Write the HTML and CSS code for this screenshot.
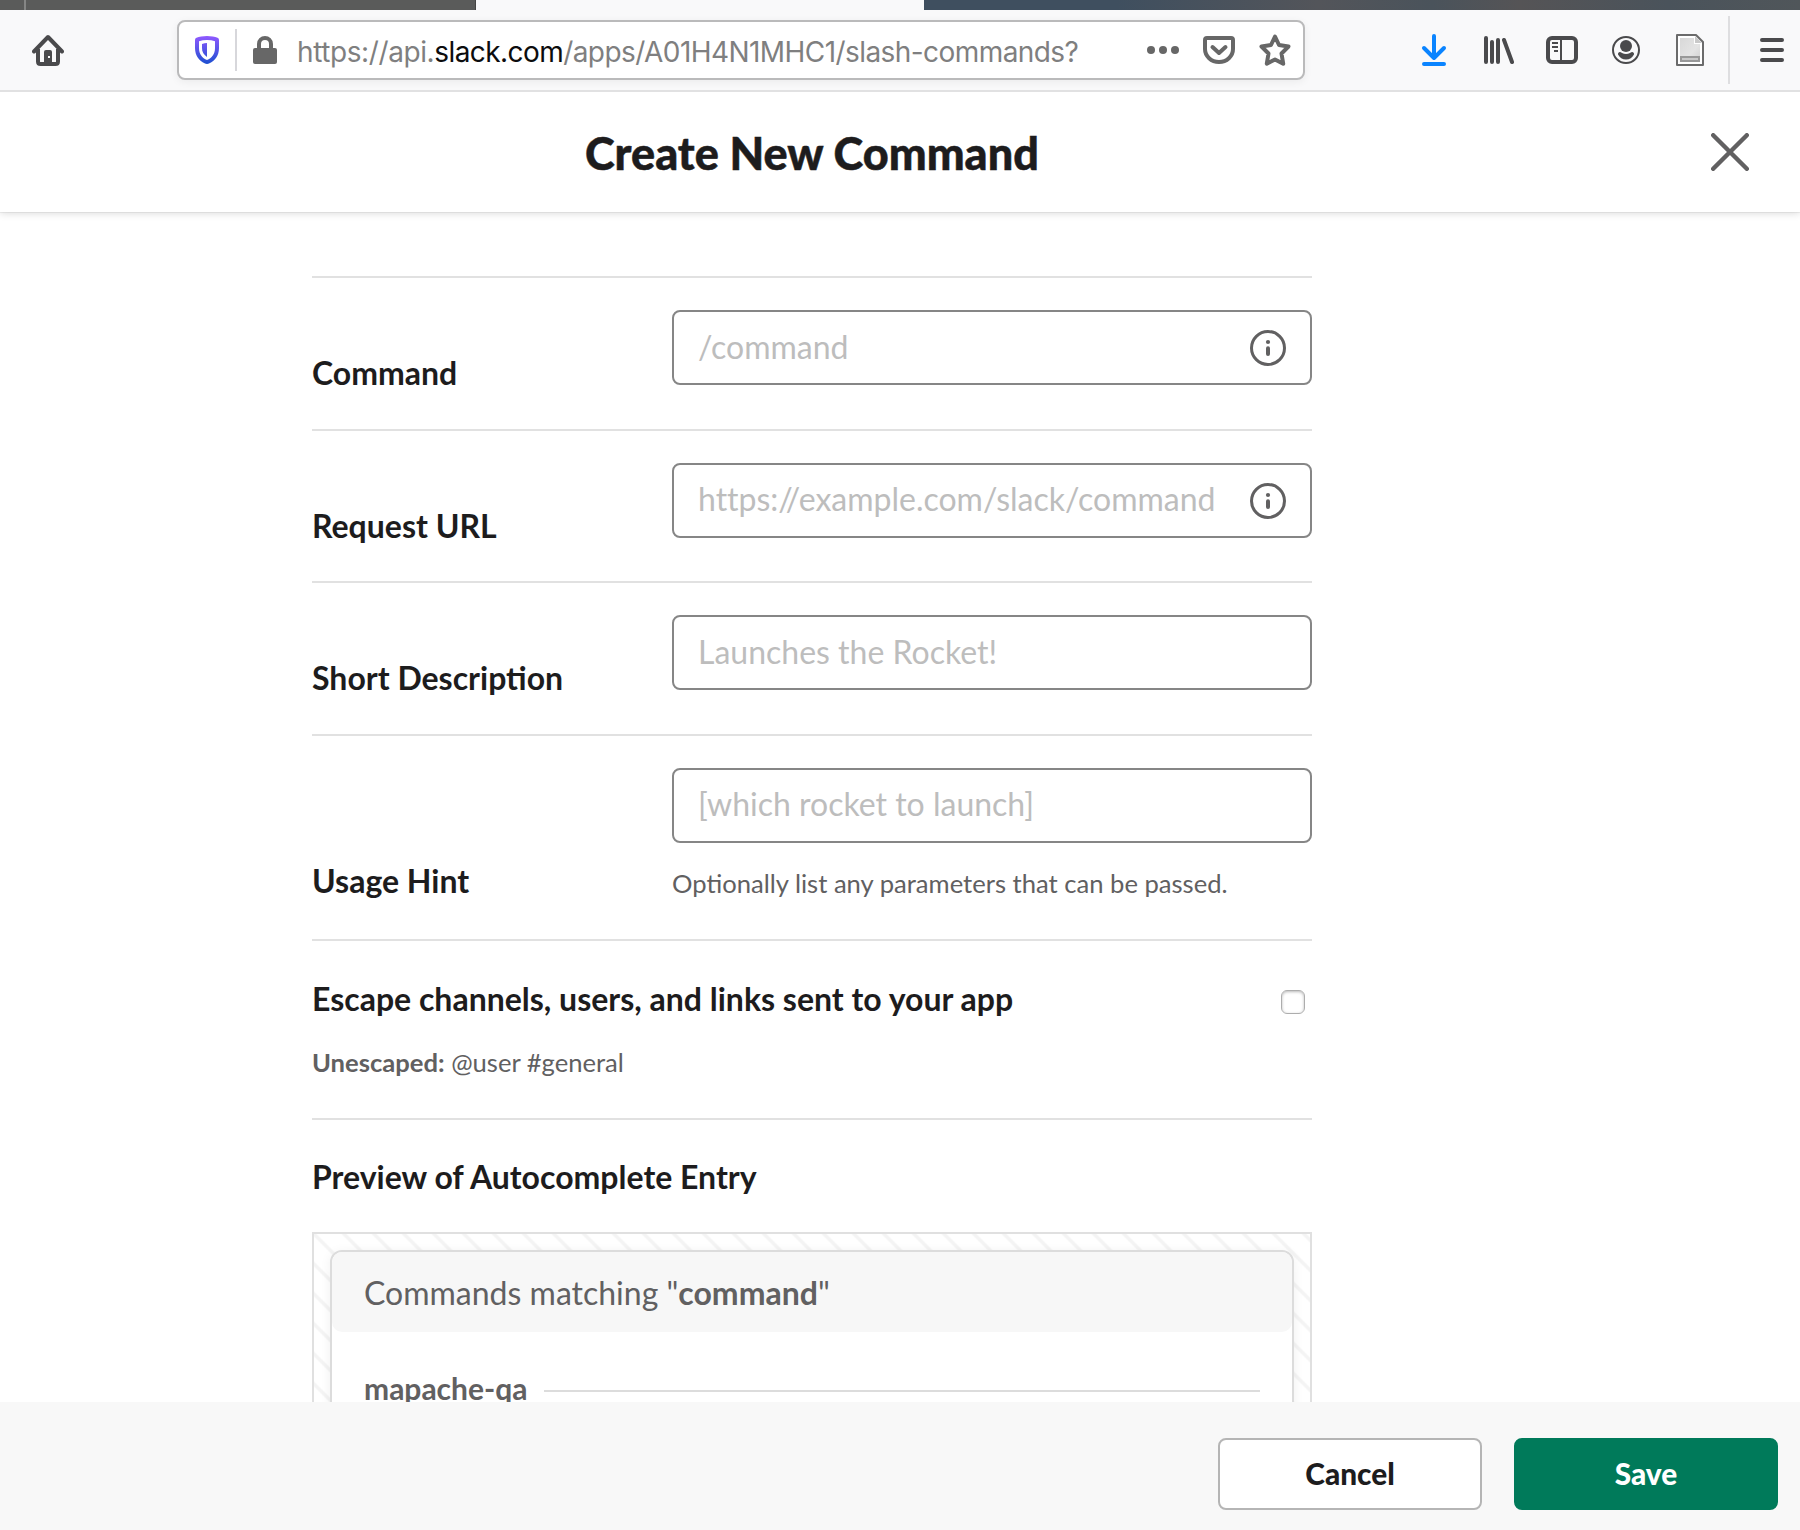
FILE: index.html
```html
<!DOCTYPE html>
<html lang="en">
<head>
<meta charset="utf-8">
<title>Create New Command</title>
<link rel="stylesheet" href="styles.css">
</head>
<body>
<div class="window">
  <div class="tabs"><span class="tab-edge"></span><span class="tab-left"></span><span class="tab-active"></span><span class="tab-right"></span></div>
  <nav class="toolbar">
    <svg class="icon home" viewBox="0 0 32 32"><path d="M2 17.500 16 3 30 17.500" fill="none" stroke="#4a4a4c" stroke-width="4" stroke-linecap="round" stroke-linejoin="round"/><path d="M6 15v12.500q0 2.500 2.500 2.500h15q2.500 0 2.500-2.500V15" fill="none" stroke="#4a4a4c" stroke-width="4"/><path d="M12 28V18q0-2 2-2h4q2 0 2 2v10z" fill="#4a4a4c"/><rect x="16" y="22" width="2" height="2" fill="#f9f9fa"/></svg>
    <div class="urlbar">
      <svg class="shield" viewBox="0 0 24 28"><defs><linearGradient id="g" gradientUnits="userSpaceOnUse" x1="0" y1="0" x2="0" y2="28"><stop offset="0" stop-color="#9059ff"/><stop offset="1" stop-color="#1c4fd0"/></linearGradient></defs><path fill="url(#g)" fill-rule="evenodd" d="M12 0c4 0 8 .8 10.500 1.700Q24 2.300 24 4v8c0 8-4.500 13-9.500 15.300q-2.500 1.200-5 0C4.500 25 0 20 0 12V4Q0 2.300 1.500 1.700C4 .8 8 0 12 0zM12 4Q7.500 4 4 5.200V12c0 6 3.200 10 8 12 4.800-2 8-6 8-12V5.200Q16.500 4 12 4z"/><path fill="url(#g)" d="M12 7v14C8.500 18.500 7 16 7 12V8q2.500-.8 5-1z"/></svg>
      <span class="url-rule"></span>
      <svg class="lock" viewBox="0 0 24 28"><path d="M6 13V8a6 6 0 0 1 12 0v5" fill="none" stroke="#676767" stroke-width="4"/><rect y="12" width="24" height="16" rx="2" fill="#676767"/></svg>
      <span class="url"><span class="scheme">https://api.</span><b>slack.com</b>/apps/A01H4N1MHC1/slash-commands?</span>
      <svg class="icon" viewBox="0 0 32 32" fill="#676767"><circle cx="4" cy="16" r="4"/><circle cx="16" cy="16" r="4"/><circle cx="28" cy="16" r="4"/></svg>
      <svg class="icon" viewBox="0 0 32 32" fill="none" stroke="#676767" stroke-width="4"><path d="M4 4h24q2 0 2 2v9a14 13 0 0 1-28 0V6q0-2 2-2z"/><path d="m9.500 13 6.500 6 6.500-6" stroke-linecap="round" stroke-linejoin="round"/></svg>
      <svg class="icon" viewBox="0 0 32 32"><path d="m16 2.500 4 8.500 9.500 1.500-7 7 1.700 10.200-8.200-4.200-8.200 4.200 1.700-10.200-7-7L12 11z" fill="none" stroke="#676767" stroke-width="4" stroke-linejoin="round"/></svg>
    </div>
    <div class="actions">
      <svg class="icon" viewBox="0 0 32 32" fill="none" stroke="#0a84ff" stroke-width="4" stroke-linecap="round" stroke-linejoin="round"><path d="M16 2v22M6 14l10 10 10-10M6 30h20"/></svg>
      <svg class="icon" viewBox="0 0 32 32" fill="none" stroke="#4a4a4c" stroke-width="4" stroke-linecap="round"><path d="M4 4v24M10 8v20M16 6v22M22 6l8 22"/></svg>
      <svg class="icon" viewBox="0 0 32 32" fill="none" stroke="#4a4a4c"><rect x="2" y="4" width="28" height="24" rx="4" stroke-width="4"/><path d="M15 4v24M6 9h6M6 13h6M8 17h4" stroke-width="2"/></svg>
      <svg class="icon" viewBox="0 0 32 32"><circle cx="16" cy="16" r="13" fill="none" stroke="#4a4a4c" stroke-width="2"/><circle cx="16" cy="12" r="6" fill="#4a4a4c"/><path d="M9.500 18q-2 .5-1.500 2.500c1.500 3 4.500 5 8 5s6.500-2 8-5q.5-2-1.500-2.500-1.500 0-2.500 1-4 2-8 0-1-1-2.500-1z" fill="#4a4a4c"/></svg>
      <svg class="icon" viewBox="0 0 32 32"><defs><linearGradient id="d" x1="0" y1="0" x2="1" y2="1"><stop offset="0" stop-color="#d8d8d8"/><stop offset=".6" stop-color="#e4e4e4"/><stop offset="1" stop-color="#d0d0d0"/></linearGradient></defs><path d="M3 1h19l7 7v23H3z" fill="#fff" stroke="#6b6b6b" stroke-width="2" stroke-linejoin="round"/><path d="M6 4h14v6h6v18H6z" fill="url(#d)"/><path d="M21 2v7h7z" fill="#c9c9c9"/><rect x="7" y="23" width="18" height="4" fill="#c8c8c8" stroke="#989898" stroke-width="2"/></svg>
      <span class="bar-rule"></span>
      <svg class="icon" viewBox="0 0 32 32" stroke="#4a4a4c" stroke-width="4" stroke-linecap="round"><path d="M6 6h20M6 16h20M6 26h20"/></svg>
    </div>
  </nav>
  <header class="header">
    <h1 class="title">Create New Command</h1>
    <svg class="close" viewBox="0 0 38 38"><path d="m2.200 2.200 33.600 33.600M35.800 2.200 2.200 35.800" stroke="#616061" stroke-width="4.400" stroke-linecap="round"/></svg>
  </header>
  <main class="content">
    <section class="row">
      <label class="label">Command</label>
      <div class="input"><span>/command</span><svg class="info" viewBox="0 0 36 36"><circle cx="18" cy="18" r="16.500" fill="none" stroke="#616061" stroke-width="3"/><circle cx="18" cy="12" r="2.100" fill="#616061"/><path d="M18 18.300v5.700" stroke="#616061" stroke-width="4" stroke-linecap="round"/></svg></div>
    </section>
    <section class="row">
      <label class="label">Request URL</label>
      <div class="input"><span class="no-liga">https://example.com/slack/command</span><svg class="info" viewBox="0 0 36 36"><circle cx="18" cy="18" r="16.500" fill="none" stroke="#616061" stroke-width="3"/><circle cx="18" cy="12" r="2.100" fill="#616061"/><path d="M18 18.300v5.700" stroke="#616061" stroke-width="4" stroke-linecap="round"/></svg></div>
    </section>
    <section class="row">
      <label class="label">Short Description</label>
      <div class="input"><span>Launches the Rocket!</span></div>
    </section>
    <section class="row usage">
      <label class="label">Usage Hint</label>
      <div class="field"><div class="input"><span>[which rocket to launch]</span></div><p class="hint">Optionally list any parameters that can be passed.</p></div>
    </section>
    <section class="escape">
      <div class="escape-head"><span class="heading">Escape channels, users, and links sent to your app</span><span class="checkbox"></span></div>
      <p class="unescaped"><b>Unescaped:</b> @user #general</p>
    </section>
    <section class="preview">
      <h2 class="heading">Preview of Autocomplete Entry</h2>
      <div class="stripes">
        <div class="card">
          <div class="card-head"><span>Commands matching "<b>command</b>"</span></div>
          <div class="group"><b>mapache-qa</b><span class="group-rule"></span></div>
        </div>
      </div>
    </section>
  </main>
  <footer class="footer">
    <button class="btn cancel">Cancel</button>
    <button class="btn save">Save</button>
  </footer>
</div>
</body>
</html>
```
FILE: styles.css
```css
* { box-sizing: border-box; }
body { margin: 0; background: #fff; font-family: Lato, sans-serif; color: #1d1c1d; }
h1, h2, p { margin: 0; }
svg { display: block; flex: none; }
.window { width: 1800px; height: 1530px; display: flex; flex-direction: column; overflow: hidden; }

.tabs { height: 10px; flex: none; display: flex; background: #f9f9fa; }
.tab-edge { width: 26px; background: #5a5b5a; border-right: 2px solid #858685; }
.tab-left { width: 450px; background: #5a5b5a; border-right: 1px solid #444; }
.tab-active { width: 448px; }
.tab-right { flex: 1; background: linear-gradient(90deg, #3f4f5f 0, #3f4f5f 22%, #53555a 45%, #4a535b 58%, #555456 68%, #4a535b 85%, #50565a 100%); }

.toolbar { height: 82px; flex: none; display: flex; align-items: center; padding: 0 12px 0 32px; background: #f9f9fa; border-bottom: 2px solid #e1e1e2; }
.icon { width: 32px; height: 32px; }
.urlbar { width: 1128px; height: 60px; margin-left: 113px; padding: 0 12px 0 16px; display: flex; align-items: center; background: #fff; border: 2px solid #bababb; border-radius: 8px; box-shadow: 0 2px 8px rgba(0,0,0,.06); }
.shield { width: 24px; height: 28px; }
.url-rule { width: 2px; height: 42px; margin: 0 16px; background: #d7d7db; }
.lock { width: 24px; height: 28px; }
.url { width: 829px; flex: none; margin: 0 21px 0 20px; padding-top: 3px; font: 28px/40px Inter, sans-serif; letter-spacing: -.57px; color: #7f7f80; white-space: nowrap; }
.scheme { letter-spacing: -.4px; }
.url b { font-weight: 400; color: #0c0c0d; }
.urlbar .icon + .icon { margin-left: 24px; }
.actions { display: flex; align-items: center; gap: 32px; margin-left: 113px; }
.bar-rule { width: 2px; height: 68px; margin: 0 -6px 0 -10px; background: #dedee0; }

.header { height: 120px; flex: none; display: flex; align-items: center; justify-content: space-between; padding: 0 51px 0 585px; background: #fff; box-shadow: 0 1px 0 rgba(0,0,0,.05), 0 1px 8px rgba(0,0,0,.16); clip-path: inset(0 0 -20px 0); z-index: 1; }
.title { font-size: 45px; line-height: 56px; font-weight: 900; white-space: nowrap; padding-top: 1px; -webkit-text-stroke: .5px #1d1c1d; }
.close { width: 38px; height: 38px; }

.content { flex: 1; min-height: 0; width: 1000px; margin-left: 312px; padding-top: 64px; overflow: hidden; }
.row { height: 152.670px; border-top: 2px solid #e1e1e1; padding-top: 32px; display: flex; justify-content: space-between; }
.label, .heading { font-size: 32px; line-height: 40px; font-weight: 700; white-space: nowrap; }
.label { padding-top: 43px; }
.field { width: 640px; }
.input { width: 640px; height: 75px; border: 2px solid #868686; border-radius: 8px; padding: 0 24px; display: flex; align-items: center; justify-content: space-between; font-size: 32px; line-height: 40px; color: #bdbdbd; white-space: nowrap; }
.input span { padding-bottom: 2px; }
.no-liga { font-variant-ligatures: none; }
.info { width: 36px; height: 36px; margin-top: 1px; }
.usage { height: 205px; }
.usage .label { padding-top: 93px; }
.hint { font-size: 25.600px; line-height: 44px; margin-top: 18px; color: #616061; white-space: nowrap; }
.escape { height: 179px; border-top: 2px solid #e1e1e1; padding-top: 38px; }
.escape-head { display: flex; justify-content: space-between; padding-right: 7px; }
.checkbox { width: 24px; height: 24px; margin-top: 11px; border: 1px solid #adadad; border-radius: 6px; box-shadow: inset 0 1px 3px rgba(0,0,0,.28); }
.unescaped { margin-top: 23px; font-size: 25.600px; line-height: 40px; color: #616061; }
.preview { border-top: 2px solid #e1e1e1; padding-top: 37px; }
.stripes { height: 304px; margin-top: 35px; padding: 16px; border: 2px solid #e0e0e0; background: repeating-linear-gradient(45deg, #f4f4f4 0, #f4f4f4 1px, #fff 2.500px, #fff 18.713px, #f4f4f4 20.213px, #f4f4f4 21.213px); }
.card { height: 268px; border: 2px solid #dcdcdc; border-radius: 12px; background: #fff; box-shadow: 0 2px 12px rgba(0,0,0,.06); color: #616061; font-size: 32px; line-height: 40px; }
.card-head { height: 80px; padding: 21px 32px 19px; background: #f7f7f7; border-radius: 10px; white-space: nowrap; }
.group { display: flex; align-items: center; gap: 17px; padding: 36px 32px 0; font-size: 30px; }
.group-rule { flex: 1; height: 2px; margin-top: 6px; background: #dcdcdc; }

.footer { height: 128px; flex: none; display: flex; justify-content: flex-end; gap: 32px; padding: 36px 22px 0 0; background: #f8f8f8; z-index: 1; }
.btn { width: 264px; height: 72px; padding: 0 0 1px; border: 2px solid #b5b5b5; border-radius: 8px; background: #fff; color: #1d1c1d; font: 900 29.800px/40px Lato, sans-serif; }
.save { background: #007a5a; border-color: #007a5a; color: #fff; }
```
